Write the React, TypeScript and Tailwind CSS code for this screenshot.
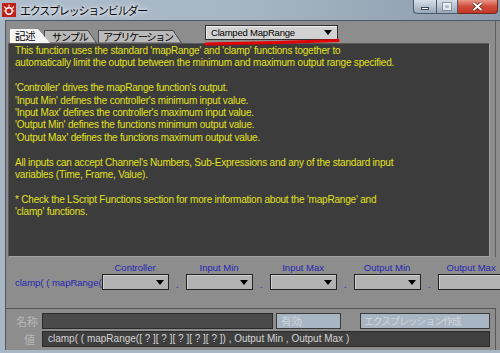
import React from 'react'

const description = [
  "This function uses the standard 'mapRange' and 'clamp' functions together to",
  'automatically limit the output between the minimum and maximum output range specified.',
  '',
  "'Controller' drives the mapRange function's output.",
  "'Input Min' defines the controller's minimum input value.",
  "'Input Max' defines the controller's maximum input value.",
  "'Output Min' defines the functions minimum output value.",
  "'Output Max' defines the functions maximum output value.",
  '',
  "All inputs can accept Channel's Numbers, Sub-Expressions and any of the standard input",
  'variables (Time, Frame, Value).',
  '',
  "* Check the LScript Functions section for more information about the 'mapRange' and",
  "'clamp' functions.",
]

const params = ['Controller', 'Input Min', 'Input Max', 'Output Min', 'Output Max']

function Arrow() {
  return (
    <svg width="8" height="5" viewBox="0 0 8 5">
      <path d="M0 0 H8 L4 5 Z" fill="#000" />
    </svg>
  )
}

function TitleBar() {
  return (
    <div className="h-[20px] flex items-start bg-linear-to-r from-[#aebccb] via-[#a6b5c4] to-[#8c9cac]">
      {/* app icon */}
      <svg width="14" height="14" viewBox="0 0 14 14" className="ml-[2px] mt-[3px]">
        <rect width="14" height="14" fill="#c0201a" />
        <circle cx="7" cy="8" r="3.2" fill="none" stroke="#fff" strokeWidth="1.4" />
        <path d="M7 1.5v3M2 3.5l2 2M12 3.5l-2 2M1.5 8h2.5M10 8h2.5" stroke="#ffd7b0" strokeWidth="1.2" />
      </svg>
      <span className="ml-[4px] mt-[2px] text-[11px] leading-[16px] tracking-[-1.2px] text-black font-['Noto_Sans_CJK_JP',sans-serif] [text-shadow:0_0_6px_#fff,0_0_3px_#fff]">
        エクスプレッションビルダー
      </span>
      <div className="flex-1" />
      <div className="flex mr-[2px]">
        <div className="w-[24px] h-[14px] border border-[#4b5a69] border-t-0 rounded-bl-[4px] bg-linear-to-b from-[#d6dfe8] to-[#98a8b8] flex items-center justify-center">
          <div className="w-[8px] h-[3px] mt-[4px] bg-white border border-[#394754]" />
        </div>
        <div className="w-[21px] h-[14px] border-b border-r border-[#4b5a69] bg-linear-to-b from-[#d6dfe8] to-[#98a8b8] flex items-center justify-center">
          <div className="w-[8px] h-[7px] border-2 border-white outline outline-1 outline-[#6f7f8f] opacity-70" />
        </div>
        <div className="w-[40px] h-[14px] border-b border-r border-[#6b2a22] rounded-br-[4px] bg-linear-to-b from-[#e8968a] via-[#cf4a38] to-[#c4382a] flex items-center justify-center">
          <svg width="11" height="9" viewBox="0 0 11 9">
            <path d="M1.5 1 L9.5 8 M9.5 1 L1.5 8" stroke="#5a1a12" strokeWidth="3.2" />
            <path d="M1.5 1 L9.5 8 M9.5 1 L1.5 8" stroke="#fff" strokeWidth="2" />
          </svg>
        </div>
      </div>
    </div>
  )
}

function Tab({ label, width, height, slant, active, className, textClass }: {
  label: string
  width: number
  height: number
  slant: number
  active?: boolean
  className?: string
  textClass?: string
}) {
  return (
    <div className={`relative ${className ?? ''}`} style={{ width, height }}>
      <svg width={width} height={height} className="absolute inset-0">
        <polygon
          points={`0.5,${height} 0.5,0.5 ${width - slant},0.5 ${width - 0.5},${height}`}
          fill={active ? '#f6f6f6' : '#b9b9b9'}
          stroke={active ? '#f6f6f6' : '#4a4a4a'}
          strokeWidth="1"
        />
      </svg>
      <span className={`relative block text-black leading-[13px] font-['Noto_Sans_CJK_JP',sans-serif] ${textClass ?? ''}`}>
        {label}
      </span>
    </div>
  )
}

export default function App() {
  return (
    <div className="relative w-[500px] h-[353px] overflow-hidden bg-[#a9b7c5] flex flex-col font-['Liberation_Sans','Noto_Sans_CJK_JP',sans-serif]">
      <TitleBar />
      <div className="flex-1 flex pl-[5px] min-h-0">
        <div className="flex-1 min-w-0 flex flex-col bg-[#8d8d8d] border-l border-t border-[#4d5965]">
          {/* Tabs + preset combo */}
          <div className="w-[490px] border-r border-[#5f5f5f] flex flex-col">
            <div className="h-[22px] flex items-end pl-[4px]">
              <Tab label="記述" width={40} height={14} slant={12} active className="z-10" textClass="pl-[5px] text-[10.5px] tracking-[-0.5px]" />
              <Tab label="サンプル" width={53} height={13} slant={9} className="-ml-[6px]" textClass="pl-[8px] text-[10px] tracking-[-1px]" />
              <Tab label="アプリケーション" width={84} height={13} slant={9} className="ml-[1px]" textClass="pl-[5px] text-[10px] tracking-[-1.25px]" />
              <div className="self-start mt-[4px] ml-[23px] w-[133px] h-[15px] border border-[#2e2e2e] bg-[#d2d2d2] shadow-[inset_1px_1px_0_#efefef] flex items-center pl-[5px] pr-[5px]">
                <span className="flex-1 text-[9.5px] leading-[13px] tracking-[-0.2px] text-black">Clamped MapRange</span>
                <Arrow />
              </div>
            </div>

            {/* Description */}
            <div className="ml-[2px] w-[482px] h-[214px] bg-[#3c3c3c] border border-t-[#5a5a5a] border-l-[#5a5a5a] border-r-[#a2a2a2] border-b-[#a2a2a2] pl-[6px] pt-[1px] text-[10px] leading-[12.4px] tracking-[-0.2px] text-[#e2e21c] whitespace-pre">
              {description.map((line, i) => (
                <div key={i} className="h-[12.4px]">{line}</div>
              ))}
            </div>
          </div>

          {/* Parameters */}
          <div className="h-[51px] flex items-start pl-[9px] pt-[5px] text-[#2626b2]">
            <span className="w-[92px] mt-[15px] text-[9.5px] leading-[12px] whitespace-nowrap">clamp( ( mapRange(</span>
            {params.map((p, i) => (
              <React.Fragment key={p}>
                {i > 0 && (
                  <span className="w-[17px] shrink-0 text-center mt-[17px] text-[10px] leading-[12px]">.</span>
                )}
                <div className="w-[67px] shrink-0 flex flex-col items-center">
                  <span className="h-[12px] text-[9.5px] leading-[12px] whitespace-nowrap">{p}</span>
                  <div className="w-[67px] h-[16px] border border-[#242424] bg-[#b3b3b3] shadow-[inset_1px_1px_0_#cfcfcf] flex items-center justify-end pr-[4px]">
                    {i < 4 && <Arrow />}
                  </div>
                </div>
              </React.Fragment>
            ))}
          </div>

          {/* Name / value */}
          <div className="flex-1 w-[490px] border-t border-r border-[#575757] pt-[4px] flex flex-col gap-[2px]">
            <div className="flex items-center h-[16px]">
              <span className="w-[32px] text-right text-[11px] leading-[14px] text-[#b9b9b9] font-['Noto_Sans_CJK_JP',sans-serif]">名称</span>
              <div className="ml-[4px] w-[231px] h-[16px] bg-[#4a4a4a] border border-[#2b2b2b]" />
              <div className="ml-[3px] w-[65px] h-[16px] bg-[#a8b5c2] border border-[#3a3a3a] pl-[4px] text-[10.5px] leading-[14px] text-[#cdd5dc] font-['Noto_Sans_CJK_JP',sans-serif]">
                有効
              </div>
              <div className="ml-[19px] w-[130px] h-[16px] bg-[#a8b5c2] border border-[#3a3a3a] pl-[3px] text-[10px] leading-[14px] tracking-[-1.2px] text-[#cdd5dc] font-['Noto_Sans_CJK_JP',sans-serif]">
                エクスプレッション作成
              </div>
            </div>
            <div className="flex items-center h-[16px]">
              <span className="w-[32px] text-right pr-[3px] text-[11px] leading-[14px] text-[#b9b9b9] font-['Noto_Sans_CJK_JP',sans-serif]">値</span>
              <div className="ml-[4px] w-[448px] h-[16px] bg-[#3f3f3f] border border-[#2a2a2a] pl-[5px] text-[10px] leading-[14px] text-[#d4d4d4] whitespace-pre">
                clamp( ( mapRange([ ? ][ ? ][ ? ][ ? ][ ? ]) , Output Min , Output Max )
              </div>
            </div>
          </div>
        </div>
      </div>
      <div className="h-[3px]" />

      {/* red marker stroke drawn over the preset combo */}
      <svg width="500" height="60" className="absolute left-0 top-0 pointer-events-none">
        <path d="M206 44 Q 272 43.2 338 40.5" stroke="#e40000" strokeWidth="3" fill="none" strokeLinecap="round" />
      </svg>
    </div>
  )
}
